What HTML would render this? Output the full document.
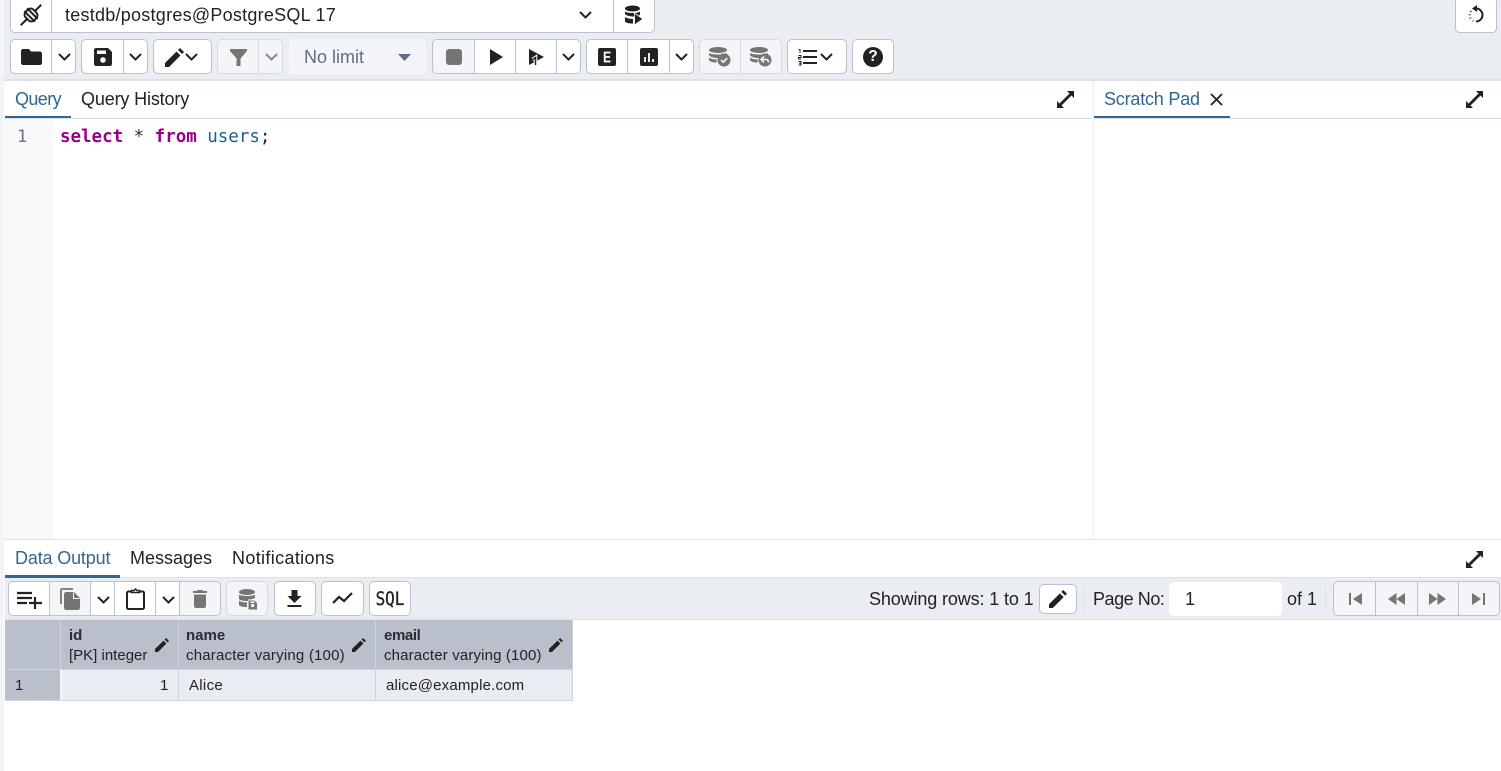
<!DOCTYPE html>
<html><head><meta charset="utf-8">
<style>
html,body{margin:0;padding:0;width:1501px;height:771px;overflow:hidden;background:#fff;font-family:"Liberation Sans",sans-serif;color:#222}
.a{position:absolute}
.g{position:absolute;box-sizing:border-box;background:#fff;border:1px solid #bac1cf;border-radius:5px}
.g.d{background:#f3f5f9;border-color:#d5d9e2}
.l{position:absolute;width:1px;background:#bac1cf}
.t{position:absolute;white-space:nowrap;font-size:18px;line-height:22px}
.c{font-size:15px!important;line-height:20px!important}
svg{position:absolute;overflow:visible}
</style></head><body>
<div class="a" style="left:0;top:0;width:4px;height:771px;background:#f3f4f8"></div>
<div class="a" style="left:4px;top:0;width:1497px;height:79px;background:#eaedf2"></div>
<div class="a" style="left:4px;top:79px;width:1497px;height:2px;background:#dde0e8"></div>

<!-- top row -->
<div class="g" style="left:10px;top:-4px;width:645px;height:37px"></div>
<div class="l" style="left:51px;top:0;height:32px"></div>
<div class="l" style="left:613px;top:0;height:32px"></div>
<svg style="left:20px;top:4px" width="22" height="22" viewBox="0 0 22 22" fill="none" stroke="#222" stroke-width="2"><g transform="rotate(45 11 11)"><rect x="5" y="5.500" width="12" height="11" rx="4"/><path d="M11 -3.500v9M11 16.500v9M3.500 9h15M3.500 13h15"/></g></svg>
<div class="t" style="left:65px;top:4px;letter-spacing:.25px">testdb/postgres@PostgreSQL 17</div>
<svg style="left:579px;top:11px" width="13" height="8" fill="none" stroke="#222" stroke-width="2"><path d="M1 1l5.500 5.500L12 1"/></svg>
<svg style="left:624px;top:5px" width="19" height="20" viewBox="0 0 19 20" fill="#222"><ellipse cx="8.500" cy="3.500" rx="7.500" ry="3"/><path d="M1 6.500c2 2 13 2 15 0v3c-1 1.500-4 2-6 2-4 0-8-1-9-2.500zM1 12c2 1.500 6 2 8 2v4.500c-4 0-7-.5-8-2z"/><path d="M10.500 8L19 14l-8.500 6z" stroke="#fff" stroke-width=".8"/></svg>
<div class="g" style="left:1455px;top:-4px;width:42px;height:37px"></div>
<svg style="left:1467px;top:5px" width="18" height="19" viewBox="0 0 18 19" fill="none" stroke="#222" stroke-width="2"><path d="M9 3.500A6.500 6.500 0 1 1 9 16.500"/><path d="M10 0L5 3.500 10 7z" fill="#222" stroke="none"/><path d="M6.300 16l-.6-.3M3.600 13.500l-.4-.8M2.600 10.200v-1M3.500 6.800l.5-.8" stroke-width="2"/></svg>

<!-- second row -->
<div class="g" style="left:10px;top:39px;width:66px;height:35px"></div><div class="l" style="left:51px;top:40px;height:33px"></div>
<svg style="left:21px;top:49px" width="21" height="16" viewBox="0 0 21 16" fill="#222"><path d="M2 0h6l2 2.500h9c1 0 2 1 2 2V14c0 1-1 2-2 2H2c-1 0-2-1-2-2V2C0 1 1 0 2 0z"/></svg>
<svg style="left:58px;top:53px" width="13" height="8" fill="none" stroke="#222" stroke-width="2"><path d="M1 1l5.500 5.500L12 1"/></svg>

<div class="g" style="left:81px;top:39px;width:67px;height:35px"></div><div class="l" style="left:123px;top:40px;height:33px"></div>
<svg style="left:94px;top:48px" width="18" height="18" viewBox="0 0 18 18"><path d="M2 0h12l4 4v12c0 1-1 2-2 2H2c-1 0-2-1-2-2V2C0 1 1 0 2 0z" fill="#222"/><rect x="3" y="2.500" width="9" height="3.500" fill="#fff"/><circle cx="9" cy="12" r="2.800" fill="#fff"/></svg>
<svg style="left:129px;top:53px" width="13" height="8" fill="none" stroke="#222" stroke-width="2"><path d="M1 1l5.500 5.500L12 1"/></svg>

<div class="g" style="left:153px;top:39px;width:59px;height:35px"></div>
<svg style="left:165px;top:48px" width="19" height="19" viewBox="0 0 19 19" fill="#222"><path d="M0 19v-4L11.500 3.500l4 4L4 19zM13 2l2-2 4 4-2 2z"/></svg>
<svg style="left:185px;top:53px" width="13" height="8" fill="none" stroke="#222" stroke-width="2"><path d="M1 1l5.500 5.500L12 1"/></svg>

<div class="g d" style="left:217px;top:39px;width:66px;height:35px"></div><div class="l" style="left:258px;top:40px;height:33px;background:#d5d9e2"></div>
<svg style="left:230px;top:49px" width="17" height="17" viewBox="0 0 17 17" fill="#757575"><path d="M0 0h17v2L10.500 9.500V17h-4V9.500L0 2z"/></svg>
<svg style="left:265px;top:53px" width="13" height="8" fill="none" stroke="#8a8a8a" stroke-width="2"><path d="M1 1l5.500 5.500L12 1"/></svg>

<div class="g d" style="left:288px;top:38px;width:139px;height:37px;border-color:#eceff4"></div>
<div class="t" style="left:304px;top:46px;color:#646b82">No limit</div>
<svg style="left:398px;top:54px" width="13" height="7"><path d="M0 0h13L6.500 7z" fill="#646b82"/></svg>

<div class="g" style="left:432px;top:39px;width:149px;height:35px"></div>
<div class="a" style="left:433px;top:40px;width:41px;height:33px;background:#f3f5f9;border-radius:4px 0 0 4px"></div>
<div class="l" style="left:474px;top:40px;height:33px"></div><div class="l" style="left:515px;top:40px;height:33px"></div><div class="l" style="left:556px;top:40px;height:33px"></div>
<div class="a" style="left:446px;top:49px;width:16px;height:16px;border-radius:3px;background:#757575"></div>
<svg style="left:490px;top:49px" width="13" height="16"><path d="M0 0l13 8-13 8z" fill="#222"/></svg>
<svg style="left:529px;top:49px" width="15" height="16" viewBox="0 0 15 16"><path d="M0 0l15 8-15 8z" fill="#222"/><path d="M3.500 10.500l3-2v7.500" fill="none" stroke="#fff" stroke-width="3.500"/><path d="M3.500 10.500l3-2v7.500" fill="none" stroke="#222" stroke-width="1.500"/></svg>
<svg style="left:562px;top:53px" width="13" height="8" fill="none" stroke="#222" stroke-width="2"><path d="M1 1l5.500 5.500L12 1"/></svg>

<div class="g" style="left:586px;top:39px;width:108px;height:35px"></div>
<div class="l" style="left:627px;top:40px;height:33px"></div><div class="l" style="left:669px;top:40px;height:33px"></div>
<svg style="left:598px;top:48px" width="18" height="18"><rect width="18" height="18" rx="2" fill="#222"/><path d="M6 4.500h6.500M6 9h6M6 13.500h6.500M6.700 4v10" stroke="#fff" stroke-width="1.800" fill="none"/></svg>
<svg style="left:640px;top:48px" width="18" height="18"><rect width="18" height="18" rx="2" fill="#222"/><path d="M5 9v5M9 5v9M13 11v3" stroke="#fff" stroke-width="1.800" fill="none"/></svg>
<svg style="left:675px;top:53px" width="13" height="8" fill="none" stroke="#222" stroke-width="2"><path d="M1 1l5.500 5.500L12 1"/></svg>

<div class="g d" style="left:699px;top:39px;width:83px;height:35px"></div><div class="l" style="left:740px;top:40px;height:33px;background:#d5d9e2"></div>
<svg style="left:709px;top:47px" width="22" height="20" viewBox="0 0 22 20" fill="#757575"><ellipse cx="9" cy="3" rx="9" ry="3"/><path d="M0 6c2 2 16 2 18 0v2c-5 0-8 2-9 3-4 0-8-1-9-3zM0 10.500c2 1.500 5 2 8 2l-.5 3C4 15.500 1 15 0 13z"/><circle cx="15" cy="13" r="6.500"/><path d="M12 13l2.200 2.200 4-4" stroke="#fff" stroke-width="1.500" fill="none"/></svg>
<svg style="left:750px;top:47px" width="22" height="20" viewBox="0 0 22 20" fill="#757575"><ellipse cx="9" cy="3" rx="9" ry="3"/><path d="M0 6c2 2 16 2 18 0v2c-5 0-8 2-9 3-4 0-8-1-9-3zM0 10.500c2 1.500 5 2 8 2l-.5 3C4 15.500 1 15 0 13z"/><circle cx="15" cy="13" r="6.500"/><path d="M14 9.500L11 12.500l3 3M11.500 12.500H16c2 0 2.500 1.500 2.500 3" stroke="#fff" stroke-width="1.500" fill="none"/></svg>

<div class="g" style="left:787px;top:39px;width:60px;height:35px"></div>
<svg style="left:798px;top:49px" width="20" height="16" viewBox="0 0 20 16"><path d="M5 2h14M5 8h14M5 14h14" stroke="#222" stroke-width="2"/><path d="M.5 .5H2V4M.5 6.500H3V8.500H.5V10H3M.5 12.500H3V16H.5M1 14.200h2" stroke="#222" stroke-width="1" fill="none"/></svg>
<svg style="left:820px;top:53px" width="13" height="8" fill="none" stroke="#222" stroke-width="2"><path d="M1 1l5.500 5.500L12 1"/></svg>

<div class="g" style="left:852px;top:39px;width:42px;height:35px"></div>
<div class="a" style="left:863px;top:47px;width:20px;height:20px;border-radius:50%;background:#222"></div>
<div class="a" style="left:863px;top:47px;width:20px;text-align:center;color:#fff;font-weight:bold;font-size:15.500px;line-height:20px">?</div>

<!-- Query tabs -->
<div class="t" style="left:15px;top:88px;color:#326690;letter-spacing:-.6px">Query</div>
<div class="t" style="left:81px;top:88px;letter-spacing:-.15px">Query History</div>
<div class="a" style="left:5px;top:116px;width:66px;height:2px;background:#326690"></div>
<div class="a" style="left:5px;top:118px;width:1087px;height:1px;background:#dde0e8"></div>
<div class="a" style="left:1095px;top:118px;width:406px;height:1px;background:#dde0e8"></div>
<svg style="left:1057px;top:91px" width="17" height="17" viewBox="0 0 17 17" fill="#222"><path d="M10 0h7v7l-2.500-2.500L4.500 14.500 7 17H0v-7l2.500 2.500L12.500 2.500z"/></svg>
<svg style="left:1466px;top:91px" width="17" height="17" viewBox="0 0 17 17" fill="#222"><path d="M10 0h7v7l-2.500-2.500L4.500 14.500 7 17H0v-7l2.500 2.500L12.500 2.500z"/></svg>

<!-- Editor -->
<div class="a" style="left:5px;top:119px;width:48px;height:420px;background:#f7f8fa"></div>
<div class="a" style="left:1092px;top:81px;width:3px;height:458px;background:#f5f6f8"></div>
<div class="a" style="left:17px;top:127px;font:17px/20px 'DejaVu Sans Mono',monospace;color:#6b7280">1</div>
<div class="a" style="left:60px;top:127px;white-space:pre;font:17.500px/20px 'DejaVu Sans Mono',monospace;letter-spacing:-.02px"><span style="color:#908;font-weight:bold">select</span><span style="color:#333"> * </span><span style="color:#908;font-weight:bold">from</span><span style="color:#1a5f96"> users</span><span style="color:#222">;</span></div>

<!-- Scratch -->
<div class="t" style="left:1104px;top:88px;color:#326690;letter-spacing:-.2px">Scratch Pad</div>
<svg style="left:1210px;top:93px" width="13" height="13" fill="none" stroke="#222" stroke-width="1.800"><path d="M1 1l11 11M12 1L1 12"/></svg>
<div class="a" style="left:1094px;top:116px;width:136px;height:2px;background:#326690"></div>

<!-- Lower -->
<div class="a" style="left:4px;top:539px;width:1497px;height:1px;background:#dde0e8"></div>
<div class="t" style="left:15px;top:547px;color:#326690;letter-spacing:-.16px">Data Output</div>
<div class="t" style="left:130px;top:547px">Messages</div>
<div class="t" style="left:232px;top:547px;letter-spacing:.35px">Notifications</div>
<svg style="left:1466px;top:551px" width="17" height="17" viewBox="0 0 17 17" fill="#222"><path d="M10 0h7v7l-2.500-2.500L4.500 14.500 7 17H0v-7l2.500 2.500L12.500 2.500z"/></svg>
<div class="a" style="left:5px;top:575px;width:115px;height:3px;background:#326690"></div>
<div class="a" style="left:120px;top:577px;width:1381px;height:1px;background:#dde0e8"></div>
<div class="a" style="left:5px;top:578px;width:1496px;height:41px;background:#eaedf2"></div>
<div class="a" style="left:5px;top:619px;width:1496px;height:1px;background:#dde0e8"></div>

<!-- results toolbar -->
<div class="g" style="left:8px;top:581px;width:213px;height:35px"></div>
<div class="a" style="left:50px;top:582px;width:40px;height:33px;background:#f3f5f9"></div>
<div class="a" style="left:180px;top:582px;width:40px;height:33px;background:#f3f5f9;border-radius:0 4px 4px 0"></div>
<div class="l" style="left:49px;top:582px;height:33px"></div><div class="l" style="left:90px;top:582px;height:33px"></div><div class="l" style="left:114px;top:582px;height:33px"></div><div class="l" style="left:155px;top:582px;height:33px"></div><div class="l" style="left:179px;top:582px;height:33px"></div>
<svg style="left:17px;top:591px" width="25" height="18" viewBox="0 0 25 18"><path d="M0 2h15M0 7h15M0 12h10M18 6v12M12 12h13" stroke="#222" stroke-width="2.200" fill="none"/></svg>
<svg style="left:60px;top:588px" width="20" height="22" viewBox="0 0 20 22" fill="#757575"><path d="M1 16V2c0-.5.500-1 1-1h11" fill="none" stroke="#757575" stroke-width="1.800"/><path d="M6 4h8l6 6v10c0 1-1 2-2 2H6c-1 0-2-1-2-2V6c0-1 1-2 2-2z"/><path d="M13.500 4.500v6h6" fill="none" stroke="#fff" stroke-width="1"/></svg>
<svg style="left:97px;top:596px" width="13" height="8" fill="none" stroke="#222" stroke-width="2"><path d="M1 1l5.500 5.500L12 1"/></svg>
<svg style="left:126px;top:588px" width="19" height="22" viewBox="0 0 19 22" fill="none"><rect x="1" y="3.500" width="17" height="17.500" rx="1.500" stroke="#222" stroke-width="2"/><path d="M5.500 4.500V2.500h2.500l1.500-1.500 1.500 1.500h2.500v2z" fill="#fff" stroke="#222" stroke-width="1.500"/></svg>
<svg style="left:162px;top:596px" width="13" height="8" fill="none" stroke="#222" stroke-width="2"><path d="M1 1l5.500 5.500L12 1"/></svg>
<svg style="left:193px;top:590px" width="14" height="18" viewBox="0 0 14 18" fill="#757575"><path d="M4.500 0h5l1 1H14v2H0V1h3.500zM1 4.500h12V16c0 1-1 2-2 2H3c-1 0-2-1-2-2z"/></svg>

<div class="g d" style="left:226px;top:581px;width:42px;height:35px"></div>
<svg style="left:239px;top:589px" width="18" height="21" viewBox="0 0 18 21" fill="#757575"><ellipse cx="8" cy="3" rx="8" ry="3"/><path d="M0 5.500c2 2 14 2 16 0V9c-2 1-4 1.500-6 1.500H9V12H9c-4 0-8-.5-9-2zM0 11.500c2 1.500 5 2 8 2V18c-4 0-7-.500-8-2z"/><path d="M9.500 11.500h6l2.500 2.500v6.500H9.500z"/><circle cx="13.700" cy="16.500" r="1.600" fill="#fff"/><rect x="11.500" y="12.500" width="4" height="1.500" fill="#fff"/></svg>
<div class="g" style="left:274px;top:581px;width:42px;height:35px"></div>
<svg style="left:287px;top:590px" width="15" height="17" viewBox="0 0 15 17" fill="#222"><path d="M4.500 0h6v6H14.500L7.500 13 .5 6h4zM.5 15h14v2H.5z"/></svg>
<div class="g" style="left:321px;top:581px;width:43px;height:35px"></div>
<svg style="left:332px;top:592px" width="21" height="13" viewBox="0 0 21 13" fill="none" stroke="#222" stroke-width="2.200"><path d="M1 11l6-6 5 4 8-8"/></svg>
<div class="g" style="left:369px;top:581px;width:42px;height:35px"></div>
<div class="a" style="left:369px;top:588px;width:42px;text-align:center;font:19px/22px 'DejaVu Sans Mono',monospace;-webkit-text-stroke:.35px #222;transform:scaleX(.84);color:#222">SQL</div>

<div class="t" style="left:869px;top:588px;letter-spacing:-.13px">Showing rows: 1 to 1</div>
<div class="g" style="left:1039px;top:584px;width:38px;height:30px"></div>
<svg style="left:1049px;top:590px" width="18" height="18" viewBox="0 0 19 19" fill="#222"><path d="M0 19v-4L11.500 3.500l4 4L4 19zM13 2l2-2 4 4-2 2z"/></svg>
<div class="a" style="left:1084px;top:586px;width:1px;height:27px;background:#dde0e8"></div>
<div class="t" style="left:1093px;top:588px;letter-spacing:-.45px">Page No:</div>
<div class="a" style="left:1169px;top:582px;width:113px;height:34px;background:#fff;border-radius:5px"></div>
<div class="t" style="left:1185px;top:588px">1</div>
<div class="t" style="left:1287px;top:588px">of 1</div>
<div class="a" style="left:1325px;top:586px;width:1px;height:27px;background:#dde0e8"></div>
<div class="g d" style="left:1333px;top:581px;width:167px;height:35px;border-color:#bac1cf"></div>
<div class="l" style="left:1375px;top:582px;height:33px"></div><div class="l" style="left:1417px;top:582px;height:33px"></div><div class="l" style="left:1458px;top:582px;height:33px"></div>
<svg style="left:1349px;top:593px" width="13" height="12" fill="#757575"><path d="M0 0h2v12H0zM13 0v12L4 6z"/></svg>
<svg style="left:1388px;top:593px" width="17" height="12" fill="#757575"><path d="M8.500 0v12L0 6zM17 0v12L8.500 6z"/></svg>
<svg style="left:1429px;top:593px" width="17" height="12" fill="#757575"><path d="M0 0v12L8.500 6zM8.500 0v12L17 6z"/></svg>
<svg style="left:1472px;top:593px" width="13" height="12" fill="#757575"><path d="M11 0h2v12h-2zM0 0v12l9-6z"/></svg>

<!-- grid -->
<div class="a" style="left:5px;top:620px;width:568px;height:49px;background:#b9bfcb"></div>
<div class="a" style="left:5px;top:670px;width:55px;height:30px;background:#b9bfcb"></div>
<div class="a" style="left:60px;top:670px;width:3px;height:30px;background:#f1f3f7"></div>
<div class="a" style="left:63px;top:670px;width:510px;height:30px;background:#e9ecf2"></div>
<div class="a" style="left:60px;top:620px;width:1px;height:49px;background:#ced3dc"></div>
<div class="a" style="left:178px;top:620px;width:1px;height:81px;background:#ced3dc"></div>
<div class="a" style="left:375px;top:620px;width:1px;height:81px;background:#ced3dc"></div>
<div class="a" style="left:572px;top:620px;width:1px;height:81px;background:#ced3dc"></div>
<div class="a" style="left:5px;top:669px;width:568px;height:1px;background:#ced3dc"></div>
<div class="a" style="left:5px;top:700px;width:568px;height:1px;background:#ced3dc"></div>

<div class="t c" style="left:69px;top:626px;font-weight:bold;color:#2a2c33">id</div>
<div class="t c" style="left:69px;top:646px">[PK] integer</div>
<div class="t c" style="left:186px;top:626px;font-weight:bold;color:#2a2c33">name</div>
<div class="t c" style="left:186px;top:646px;letter-spacing:.2px">character varying (100)</div>
<div class="t c" style="left:384px;top:626px;font-weight:bold;color:#2a2c33;letter-spacing:-.4px">email</div>
<div class="t c" style="left:384px;top:646px;letter-spacing:.15px">character varying (100)</div>
<svg style="left:155px;top:638px" width="14" height="14" viewBox="0 0 19 19" fill="#222"><path d="M0 19v-4L11.500 3.500l4 4L4 19zM13 2l2-2 4 4-2 2z"/></svg>
<svg style="left:352px;top:638px" width="14" height="14" viewBox="0 0 19 19" fill="#222"><path d="M0 19v-4L11.500 3.500l4 4L4 19zM13 2l2-2 4 4-2 2z"/></svg>
<svg style="left:549px;top:638px" width="14" height="14" viewBox="0 0 19 19" fill="#222"><path d="M0 19v-4L11.500 3.500l4 4L4 19zM13 2l2-2 4 4-2 2z"/></svg>

<div class="t c" style="left:15px;top:676px">1</div>
<div class="t c" style="left:160px;top:676px">1</div>
<div class="t c" style="left:189px;top:676px;letter-spacing:.3px">Alice</div>
<div class="t c" style="left:386px;top:676px;letter-spacing:.18px">alice@example.com</div>
</body></html>
